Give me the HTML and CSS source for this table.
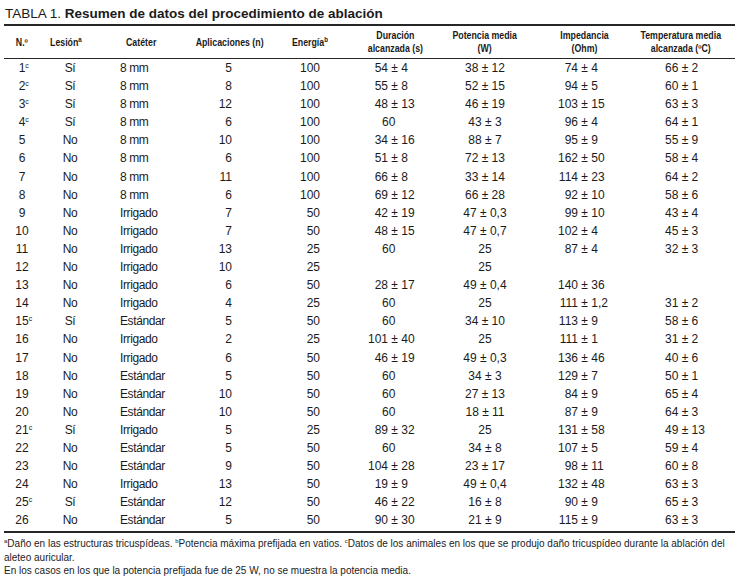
FILE: index.html
```html
<!DOCTYPE html>
<html lang="es">
<head>
<meta charset="utf-8">
<title>Tabla 1</title>
<link rel="stylesheet" href="styles.css">
</head>
<body>
<div class="page">
  <h1 class="title">TABLA 1. <b>Resumen de datos del procedimiento de ablación</b></h1>
  <table class="data">
    <colgroup>
      <col class="w36"><col class="w60"><col class="w85"><col class="w90"><col class="w80"><col class="w80"><col class="w100"><col class="w100"><col class="w100">
    </colgroup>
    <thead>
      <tr>
        <th><span class="h">N.º</span></th>
        <th><span class="h">Lesión<sup>a</sup></span></th>
        <th><span class="h">Catéter</span></th>
        <th><span class="h">Aplicaciones (n)</span></th>
        <th><span class="h">Energía<sup>b</sup></span></th>
        <th><span class="h">Duración<br>alcanzada (s)</span></th>
        <th><span class="h">Potencia media<br>(W)</span></th>
        <th><span class="h">Impedancia<br>(Ohm)</span></th>
        <th><span class="h">Temperatura media<br>alcanzada (ºC)</span></th>
      </tr>
    </thead>
    <tbody>
      <tr><td>1<sup>c</sup></td><td>Sí</td><td>8 mm</td><td>5</td><td>100</td><td><span class="n">54</span> ± 4</td><td>38 ± 12</td><td><span class="n">74</span> ± 4</td><td>66 ± 2</td></tr>
      <tr><td>2<sup>c</sup></td><td>Sí</td><td>8 mm</td><td>8</td><td>100</td><td><span class="n">55</span> ± 8</td><td>52 ± 15</td><td><span class="n">94</span> ± 5</td><td>60 ± 1</td></tr>
      <tr><td>3<sup>c</sup></td><td>Sí</td><td>8 mm</td><td>12</td><td>100</td><td><span class="n">48</span> ± 13</td><td>46 ± 19</td><td><span class="n">103</span> ± 15</td><td>63 ± 3</td></tr>
      <tr><td>4<sup>c</sup></td><td>Sí</td><td>8 mm</td><td>6</td><td>100</td><td class="solo">60</td><td>43 ± 3</td><td><span class="n">96</span> ± 4</td><td>64 ± 1</td></tr>
      <tr><td>5</td><td>No</td><td>8 mm</td><td>10</td><td>100</td><td><span class="n">34</span> ± 16</td><td>88 ± 7</td><td><span class="n">95</span> ± 9</td><td>55 ± 9</td></tr>
      <tr><td>6</td><td>No</td><td>8 mm</td><td>6</td><td>100</td><td><span class="n">51</span> ± 8</td><td>72 ± 13</td><td><span class="n">162</span> ± 50</td><td>58 ± 4</td></tr>
      <tr><td>7</td><td>No</td><td>8 mm</td><td>11</td><td>100</td><td><span class="n">66</span> ± 8</td><td>33 ± 14</td><td><span class="n">114</span> ± 23</td><td>64 ± 2</td></tr>
      <tr><td>8</td><td>No</td><td>8 mm</td><td>6</td><td>100</td><td><span class="n">69</span> ± 12</td><td>66 ± 28</td><td><span class="n">92</span> ± 10</td><td>58 ± 6</td></tr>
      <tr><td>9</td><td>No</td><td>Irrigado</td><td>7</td><td>50</td><td><span class="n">42</span> ± 19</td><td>47 ± 0,3</td><td><span class="n">99</span> ± 10</td><td>43 ± 4</td></tr>
      <tr><td>10</td><td>No</td><td>Irrigado</td><td>7</td><td>50</td><td><span class="n">48</span> ± 15</td><td>47 ± 0,7</td><td><span class="n">102</span> ± 4</td><td>45 ± 3</td></tr>
      <tr><td>11</td><td>No</td><td>Irrigado</td><td>13</td><td>25</td><td class="solo">60</td><td>25</td><td><span class="n">87</span> ± 4</td><td>32 ± 3</td></tr>
      <tr><td>12</td><td>No</td><td>Irrigado</td><td>10</td><td>25</td><td></td><td>25</td><td></td><td></td></tr>
      <tr><td>13</td><td>No</td><td>Irrigado</td><td>6</td><td>50</td><td><span class="n">28</span> ± 17</td><td>49 ± 0,4</td><td><span class="n">140</span> ± 36</td><td></td></tr>
      <tr><td>14</td><td>No</td><td>Irrigado</td><td>4</td><td>25</td><td class="solo">60</td><td>25</td><td><span class="n">111</span> ± 1,2</td><td>31 ± 2</td></tr>
      <tr><td>15<sup>c</sup></td><td>Sí</td><td>Estándar</td><td>5</td><td>50</td><td class="solo">60</td><td>34 ± 10</td><td><span class="n">113</span> ± 9</td><td>58 ± 6</td></tr>
      <tr><td>16</td><td>No</td><td>Irrigado</td><td>2</td><td>25</td><td><span class="n">101</span> ± 40</td><td>25</td><td><span class="n">111</span> ± 1</td><td>31 ± 2</td></tr>
      <tr><td>17</td><td>No</td><td>Irrigado</td><td>6</td><td>50</td><td><span class="n">46</span> ± 19</td><td>49 ± 0,3</td><td><span class="n">136</span> ± 46</td><td>40 ± 6</td></tr>
      <tr><td>18</td><td>No</td><td>Estándar</td><td>5</td><td>50</td><td class="solo">60</td><td>34 ± 3</td><td><span class="n">129</span> ± 7</td><td>50 ± 1</td></tr>
      <tr><td>19</td><td>No</td><td>Estándar</td><td>10</td><td>50</td><td class="solo">60</td><td>27 ± 13</td><td><span class="n">84</span> ± 9</td><td>65 ± 4</td></tr>
      <tr><td>20</td><td>No</td><td>Estándar</td><td>10</td><td>50</td><td class="solo">60</td><td>18 ± 11</td><td><span class="n">87</span> ± 9</td><td>64 ± 3</td></tr>
      <tr><td>21<sup>c</sup></td><td>Sí</td><td>Irrigado</td><td>5</td><td>25</td><td><span class="n">89</span> ± 32</td><td>25</td><td><span class="n">131</span> ± 58</td><td>49 ± 13</td></tr>
      <tr><td>22</td><td>No</td><td>Estándar</td><td>5</td><td>50</td><td class="solo">60</td><td>34 ± 8</td><td><span class="n">107</span> ± 5</td><td>59 ± 4</td></tr>
      <tr><td>23</td><td>No</td><td>Estándar</td><td>9</td><td>50</td><td><span class="n">104</span> ± 28</td><td>23 ± 17</td><td><span class="n">98</span> ± 11</td><td>60 ± 8</td></tr>
      <tr><td>24</td><td>No</td><td>Irrigado</td><td>13</td><td>50</td><td><span class="n">19</span> ± 9</td><td>49 ± 0,4</td><td><span class="n">132</span> ± 48</td><td>63 ± 3</td></tr>
      <tr><td>25<sup>c</sup></td><td>Sí</td><td>Estándar</td><td>12</td><td>50</td><td><span class="n">46</span> ± 22</td><td>16 ± 8</td><td><span class="n">90</span> ± 9</td><td>65 ± 3</td></tr>
      <tr><td>26</td><td>No</td><td>Estándar</td><td>5</td><td>50</td><td><span class="n">90</span> ± 30</td><td>21 ± 9</td><td><span class="n">115</span> ± 9</td><td>63 ± 3</td></tr>
    </tbody>
  </table>
  <div class="notes">
    <p class="wide"><sup>a</sup>Daño en las estructuras tricuspídeas. <sup>b</sup>Potencia máxima prefijada en vatios. <sup>c</sup>Datos de los animales en los que se produjo daño tricuspídeo durante la ablación del<br>aleteo auricular.</p>
    <p>En los casos en los que la potencia prefijada fue de 25 W, no se muestra la potencia media.</p>
  </div>
</div>
</body>
</html>
```

FILE: styles.css
```css
html, body {
  margin: 0;
  padding: 0;
  background: #ffffff;
}

body {
  color: #1b1b1b;
  font-family: "Liberation Sans", Arial, sans-serif;
}

.page {
  padding: 5px 3px 0 4px;
}

.title {
  margin: 0 0 2px 1px;
  font-size: 13.5px;
  line-height: 17px;
  font-weight: normal;
}

.title b {
  font-weight: bold;
}

.data {
  width: 731px;
  table-layout: fixed;
  border-collapse: separate;
  border-spacing: 0;
  border-top: 2px solid #262626;
  border-bottom: 2px solid #262626;
}

.w36 { width: 36px; }
.w60 { width: 60px; }
.w80 { width: 80px; }
.w85 { width: 85px; }
.w90 { width: 90px; }
.w100 { width: 100px; }

.data th {
  padding: 3px 0;
  font-size: 10px;
  line-height: 13px;
  font-weight: bold;
  text-align: center;
  vertical-align: middle;
  white-space: nowrap;
  border-bottom: 1px solid #262626;
}

/* condensed header lettering */
.h {
  display: inline-block;
  transform: scaleX(0.88);
  transform-origin: center;
}

.data td {
  height: 18.1px;
  padding: 0;
  font-size: 12px;
  line-height: 18.1px;
  white-space: nowrap;
  vertical-align: middle;
}

.data tbody tr:last-child td {
  padding-bottom: 2px;
}

sup {
  font-size: 7px;
  line-height: 0;
  vertical-align: 4px;
}

.data td sup {
  display: inline-block;
  width: 0;
}

/* column 1: N.º */
.data td:nth-child(1) { text-align: center; }

/* column 2: Lesión */
.data td:nth-child(2) { text-align: center; letter-spacing: -0.3px; }
.data th:nth-child(2) { text-align: left; padding-left: 10px; }
.data th:nth-child(2) .h { transform-origin: left; }

/* column 3: Catéter */
.data td:nth-child(3) { text-align: left; padding-left: 20px; letter-spacing: -0.4px; }
.data th:nth-child(3) { text-align: left; padding-left: 26px; }
.data th:nth-child(3) .h { transform-origin: left; }

/* column 4: Aplicaciones */
.data td:nth-child(4) { text-align: right; padding-right: 43px; }

/* column 5: Energía */
.data td:nth-child(5) { text-align: right; padding-right: 35px; }
.data th:nth-child(5) { text-align: right; padding-right: 27px; }
.data th:nth-child(5) .h { transform-origin: right; }

/* column 6: Duración, aligned on ± */
.data td:nth-child(6) { text-align: left; padding-left: 13px; }
.data td.solo { padding-left: 27px; }

/* column 7: Potencia media */
.data td:nth-child(7) { text-align: center; }

/* column 8: Impedancia, aligned on ± */
.data td:nth-child(8) { text-align: left; padding-left: 23px; }

/* column 9: Temperatura media */
.data td:nth-child(9) { text-align: left; padding-left: 30px; }
.data th:nth-child(9) { padding-right: 14px; }

.n {
  display: inline-block;
  width: 20px;
  text-align: right;
}

.notes {
  margin-top: 4px;
  font-size: 10px;
  line-height: 13.5px;
}

.notes p {
  margin: 0;
}

.notes .wide {
  white-space: nowrap;
}

.notes sup {
  font-size: 6px;
  vertical-align: 4px;
}
```
